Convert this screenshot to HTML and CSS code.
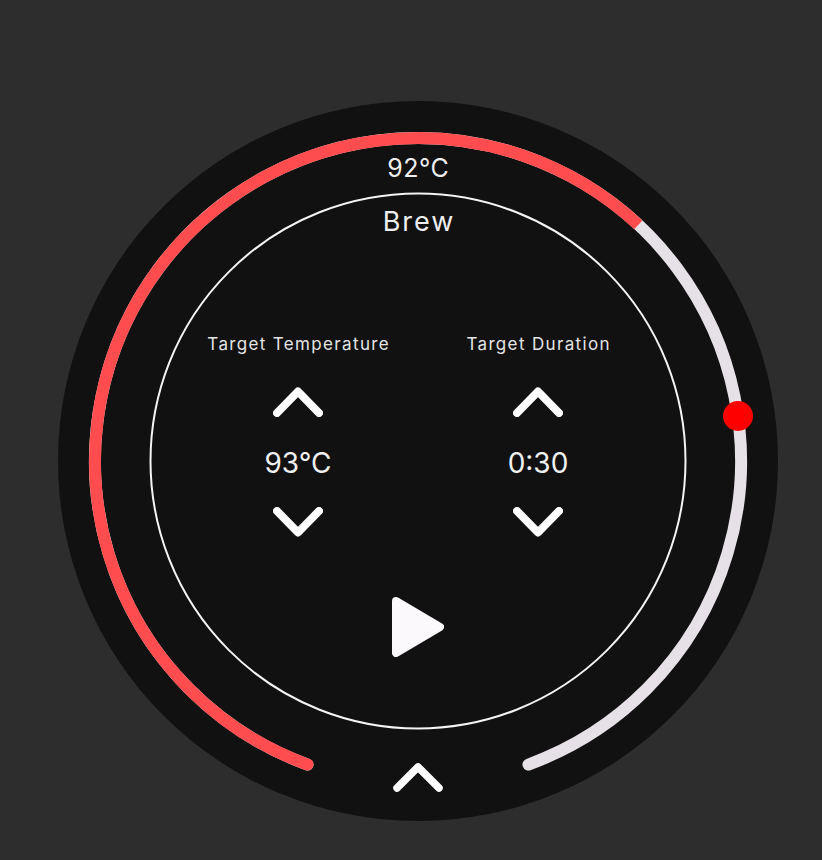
FILE: index.html
```html
<!DOCTYPE html>
<html lang="en">
<head>
<meta charset="utf-8">
<title>Brew</title>
<link rel="stylesheet" href="styles.css">
</head>
<body>
<main class="screen">
  <section class="dial">
    <svg class="ring" width="720" height="720" viewBox="0 0 720 720" aria-hidden="true">
      <circle class="inner" cx="360" cy="360" r="267.5"/>
      <path class="track" d="M249.53 663.53 A323 323 0 1 1 470.47 663.53"/>
      <path class="progress" d="M249.53 663.53 A323 323 0 1 1 580.29 123.77"/>
      <circle class="progress-cap" cx="249.53" cy="663.53" r="6"/>
      <circle class="knob" cx="680" cy="315" r="15"/>
    </svg>
    <div class="content">
      <div class="current">92°C</div>
      <div class="mode">Brew</div>
      <div class="controls">
        <div class="control">
          <div class="label">Target Temperature</div>
          <button class="step" aria-label="Increase temperature">
            <svg width="50" height="30" viewBox="0 0 50 30"><polyline points="4,26 25,4.5 46,26"/></svg>
          </button>
          <div class="value">93°C</div>
          <button class="step" aria-label="Decrease temperature">
            <svg width="50" height="30" viewBox="0 0 50 30"><polyline points="4,4 25,25.5 46,4"/></svg>
          </button>
        </div>
        <div class="control">
          <div class="label">Target Duration</div>
          <button class="step" aria-label="Increase duration">
            <svg width="50" height="30" viewBox="0 0 50 30"><polyline points="4,26 25,4.5 46,26"/></svg>
          </button>
          <div class="value">0:30</div>
          <button class="step" aria-label="Decrease duration">
            <svg width="50" height="30" viewBox="0 0 50 30"><polyline points="4,4 25,25.5 46,4"/></svg>
          </button>
        </div>
      </div>
      <button class="play" aria-label="Start">
        <svg width="52" height="60" viewBox="0 0 52 60"><polygon points="4,4 48,30 4,56"/></svg>
      </button>
      <button class="drawer" aria-label="Open menu">
        <svg width="50" height="30" viewBox="0 0 50 30"><polyline points="4,26 25,5 46,26"/></svg>
      </button>
    </div>
  </section>
</main>
</body>
</html>
```
FILE: styles.css
```css
* { box-sizing: border-box; }

html, body {
  margin: 0;
  padding: 0;
  background: #2d2d2d;
}

body {
  width: 822px;
  height: 860px;
  overflow: hidden;
  font-family: "Inter", "DejaVu Sans", sans-serif;
  color: #ececec;
}

.screen {
  padding: 101px 0 0 58px;
}

.dial {
  position: relative;
  width: 720px;
  height: 720px;
  border-radius: 50%;
  background: #111111;
}

.ring {
  position: absolute;
  left: 0;
  top: 0;
}

.ring .inner {
  fill: none;
  stroke: #f4f4f4;
  stroke-width: 2;
}

.ring .track {
  fill: none;
  stroke: #e6e1e6;
  stroke-width: 12;
  stroke-linecap: round;
}

.ring .progress {
  fill: none;
  stroke: #ff4d4f;
  stroke-width: 12;
  stroke-linecap: butt;
}

.ring .progress-cap { fill: #ff4d4f; }

.ring .knob { fill: #ff0000; }

.content {
  position: relative;
  display: flex;
  flex-direction: column;
  align-items: center;
  padding-top: 52px;
}

.current {
  height: 31px;
  line-height: 31px;
  font-size: 25px;
  letter-spacing: 0.5px;
  text-indent: 0.5px;
  color: #eeeeee;
}

.mode {
  margin-top: 23px;
  height: 30px;
  line-height: 30px;
  font-size: 27px;
  letter-spacing: 2px;
  text-indent: 2px;
  color: #eeeeee;
}

.controls {
  display: flex;
  gap: 40px;
  margin-top: 94px;
}

.control {
  width: 200px;
  display: flex;
  flex-direction: column;
  align-items: center;
}

.label {
  height: 26px;
  line-height: 26px;
  font-size: 17px;
  letter-spacing: 1.35px;
  text-indent: 1.35px;
  color: #e4e4e4;
  white-space: nowrap;
}

.step,
.play,
.drawer {
  display: block;
  padding: 0;
  border: 0;
  background: none;
  line-height: 0;
}

.step svg polyline,
.drawer svg polyline {
  fill: none;
  stroke: #ffffff;
  stroke-width: 8;
  stroke-linecap: round;
  stroke-linejoin: round;
}

.control .step:first-of-type { margin-top: 30px; }

.value {
  margin-top: 30px;
  margin-bottom: 27px;
  height: 33px;
  line-height: 33px;
  font-size: 28px;
  color: #f0f0f0;
}

.play { margin-top: 60px; }

.play svg polygon {
  fill: #fcf9fd;
  stroke: #fcf9fd;
  stroke-width: 8;
  stroke-linejoin: round;
}

.drawer { margin-top: 105px; }

.drawer svg polyline { stroke-width: 7.5; }
```
